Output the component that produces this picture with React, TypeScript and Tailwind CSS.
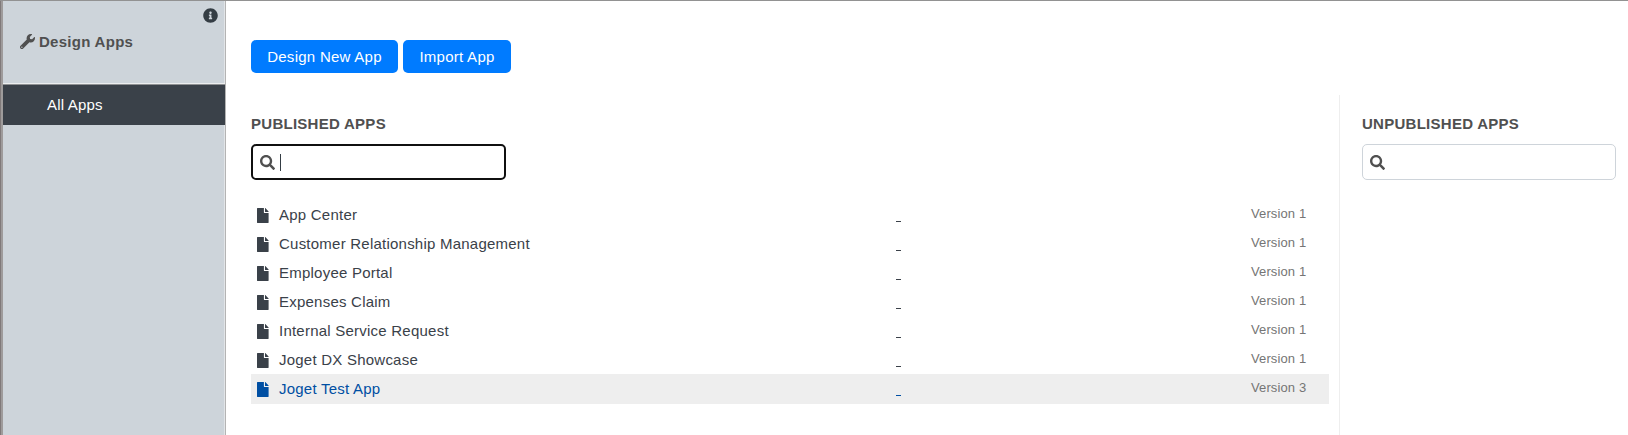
import { FaInfoCircle, FaSearch, FaWrench } from "react-icons/fa";

type AppEntry = { name: string; version: number; active?: boolean };

const publishedApps: AppEntry[] = [
  { name: "App Center", version: 1 },
  { name: "Customer Relationship Management", version: 1 },
  { name: "Employee Portal", version: 1 },
  { name: "Expenses Claim", version: 1 },
  { name: "Internal Service Request", version: 1 },
  { name: "Joget DX Showcase", version: 1 },
  { name: "Joget Test App", version: 3, active: true },
];

function FileIcon() {
  return (
    <svg viewBox="0 0 12 15" className="mt-[8px] h-[15px] w-[12px] shrink-0" fill="currentColor">
      <path d="M0.4 0H6.9V4.4Q6.9 5 7.5 5H11.6V14.6Q11.6 15 11.2 15H0.4Q0 15 0 14.6V0.4Q0 0 0.4 0ZM8 0H8.3L11.6 3.5V4H8Z" />
    </svg>
  );
}

function Sidebar() {
  return (
    <aside className="flex w-[223px] shrink-0 flex-col border-r border-[#b4b4b4] bg-[#cdd4da] shadow-[inset_-1px_0_#e2e5e8]">
      <div className="flex h-[27px] justify-end pt-[7px] pr-[7px] text-[#343d44]">
        <FaInfoCircle size={15} />
      </div>
      <h1 className="flex h-[56px] items-start gap-[4px] border-b border-[#eceeef] pt-[2px] pl-[17px] text-[15px] leading-[24px] font-bold tracking-[0.28px] text-[#505050]">
        <FaWrench size={15} className="mt-[4px]" />
        Design Apps
      </h1>
      <a className="flex h-[41px] items-center border-t border-[#8f9193] bg-[#3a4149] pl-[44px] text-[15px] tracking-[0.2px] text-white">
        All Apps
      </a>
    </aside>
  );
}

function SearchBox({ focused = false }: { focused?: boolean }) {
  return (
    <div
      className={
        focused
          ? "flex h-9 w-[255px] items-center rounded-[5px] border-2 border-[#101010] bg-white pl-[7px]"
          : "flex h-9 w-[254px] items-center rounded-[5px] border border-[#ced4da] bg-white pl-[7px]"
      }
    >
      <FaSearch size={15} className="text-[#505050]" />
      {focused && <span className="ml-[5px] h-[17px] w-px bg-[#343d44]" />}
    </div>
  );
}

function AppRow({ app }: { app: AppEntry }) {
  return (
    <li
      className={
        app.active
          ? "flex h-[30px] bg-[#eeeeee] pl-[6px] text-[#004fa3]"
          : "flex h-[29px] pl-[6px] text-[#3a4149]"
      }
    >
      <FileIcon />
      <span className="ml-[10px] w-[617px] text-[15px] leading-[30px] tracking-[0.23px]">
        {app.name}
      </span>
      <span className="mt-[21px] h-px w-[5px] bg-current" />
      <span className="ml-[350px] text-[13px] leading-[27px] tracking-[0.12px] text-[#757575]">
        Version {app.version}
      </span>
    </li>
  );
}

function SectionHeading({ children }: { children: string }) {
  return (
    <h2 className="h-[31px] text-[15px] leading-[22px] font-bold tracking-[0.27px] text-[#505050]">
      {children}
    </h2>
  );
}

export default function App() {
  return (
    <div className="flex h-[435px] w-[1628px] overflow-hidden border-t border-[#929292] bg-white font-['Liberation_Sans',Arial,sans-serif]">
      <div className="w-px bg-[#807a7a]" />
      <div className="w-[2px] bg-[#9e9b9b]" />
      <Sidebar />
      <main className="flex flex-1 flex-col pt-[39px]">
        <div className="flex gap-[5px] pl-[25px] text-[15px] tracking-[0.27px] text-white">
          <button className="h-[33px] w-[147px] rounded-[5px] bg-[#007bff] pt-px">Design New App</button>
          <button className="h-[33px] w-[108px] rounded-[5px] bg-[#007bff] pt-px">Import App</button>
        </div>
        <div className="mt-[22px] flex flex-1">
          <section className="w-[1114px] border-r border-[#eeeeee] pt-[18px] pr-[10px] pl-[25px]">
            <SectionHeading>PUBLISHED APPS</SectionHeading>
            <SearchBox focused />
            <ul className="mt-[20px]">
              {publishedApps.map((app) => (
                <AppRow key={app.name} app={app} />
              ))}
            </ul>
          </section>
          <section className="flex-1 pt-[18px] pl-[22px]">
            <SectionHeading>UNPUBLISHED APPS</SectionHeading>
            <SearchBox />
          </section>
        </div>
      </main>
    </div>
  );
}
